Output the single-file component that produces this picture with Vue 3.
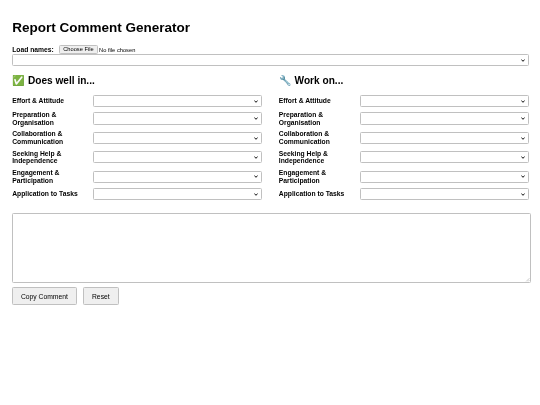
<template>
  <div class="page">
    <h1 class="title">Report Comment Generator</h1>

    <div class="load-row">
      <label class="load-label">Load names:</label>
      <input class="file-input" type="file" />
    </div>
    <select class="name-select"></select>

    <div class="columns">
      <section v-for="col in columns" :key="col.title" class="column">
        <h2 class="col-title">{{ col.icon }} {{ col.title }}</h2>
        <div v-for="cat in categories" :key="cat" class="row">
          <label class="row-label">{{ cat }}</label>
          <select class="row-select"></select>
        </div>
      </section>
    </div>

    <textarea class="output"></textarea>

    <div class="actions">
      <button class="btn" type="button">Copy Comment</button>
      <button class="btn btn-reset" type="button">Reset</button>
    </div>
  </div>
</template>

<script setup>
const columns = [
  { icon: '✅', title: 'Does well in...' },
  { icon: '🔧', title: 'Work on...' },
];

const categories = [
  'Effort & Attitude',
  'Preparation & Organisation',
  'Collaboration & Communication',
  'Seeking Help & Independence',
  'Engagement & Participation',
  'Application to Tasks',
];
</script>

<style>
body {
  margin: 0;
  background: #fff;
}
</style>

<style scoped>
/* reference is an 800px page shrunk to 540 */
.page {
  zoom: 0.675;
  box-sizing: border-box;
  width: 800px;
  padding: 30px 18px 0;
  font-family: "Liberation Sans", Arial, sans-serif;
  color: #000;
  will-change: transform;
}
.title {
  margin: 0 0 13px;
  font-size: 20px;
  line-height: 23px;
  font-weight: 700;
}
.load-row {
  display: flex;
  align-items: center;
  gap: 8px;
  height: 14px;
}
.load-label {
  font-size: 10px;
  font-weight: 700;
}
.file-input {
  font-size: 8.5px;
  font-family: "Liberation Sans", Arial, sans-serif;
}
.file-input::file-selector-button {
  height: 14px;
  padding: 0 4.5px;
  margin-right: 2px;
  font-size: 8.5px;
  background: #efefef;
  border: 1px solid #c0c0c0;
  border-radius: 2px;
}
.name-select,
.row-select {
  appearance: none;
  box-sizing: border-box;
  height: 18px;
  font-size: 10px;
  background: #fff url("data:image/svg+xml,%3Csvg xmlns='http://www.w3.org/2000/svg' width='6' height='4' viewBox='0 0 6 4'%3E%3Cpath d='M.6.7 3 3.1 5.4.7' fill='none' stroke='%23000' stroke-width='1.3'/%3E%3C/svg%3E") no-repeat right 4px center;
  border: 1px solid #c0c0c0;
  border-radius: 2px;
}
.name-select {
  display: block;
  width: 765px;
}
.columns {
  display: grid;
  grid-template-columns: 370px 370px;
  column-gap: 25px;
  margin-top: 13px;
}
.col-title {
  margin: 0 0 12.5px;
  font-size: 15px;
  line-height: 17px;
  font-weight: 700;
}
.row {
  display: flex;
  align-items: center;
  margin-bottom: 5.7px;
}
.row-label {
  flex: 0 0 120px;
  font-size: 10px;
  line-height: 11.5px;
  font-weight: 700;
}
.row-select {
  flex: 1;
  min-width: 0;
}
.output {
  display: block;
  box-sizing: border-box;
  width: 769px;
  height: 104px;
  margin-top: 13px;
  border: 1px solid #c0c0c0;
  border-radius: 2px;
  background: #fff;
}
.output::-webkit-resizer {
  background: url("data:image/svg+xml,%3Csvg xmlns='http://www.w3.org/2000/svg' width='8' height='8' viewBox='0 0 8 8'%3E%3Cpath d='M7 2 2 7M7 5 5 7' fill='none' stroke='%23aaa' stroke-width='1'/%3E%3C/svg%3E") no-repeat right bottom;
}
.actions {
  display: flex;
  gap: 9px;
  margin-top: 5.5px;
}
.btn {
  height: 27px;
  padding: 0 11.5px;
  font-size: 10px;
  font-family: "Liberation Sans", Arial, sans-serif;
  color: #000;
  background: #efefef;
  border: 1px solid #c0c0c0;
  border-radius: 2px;
}
.btn-reset {
  min-width: 54px;
}
</style>
